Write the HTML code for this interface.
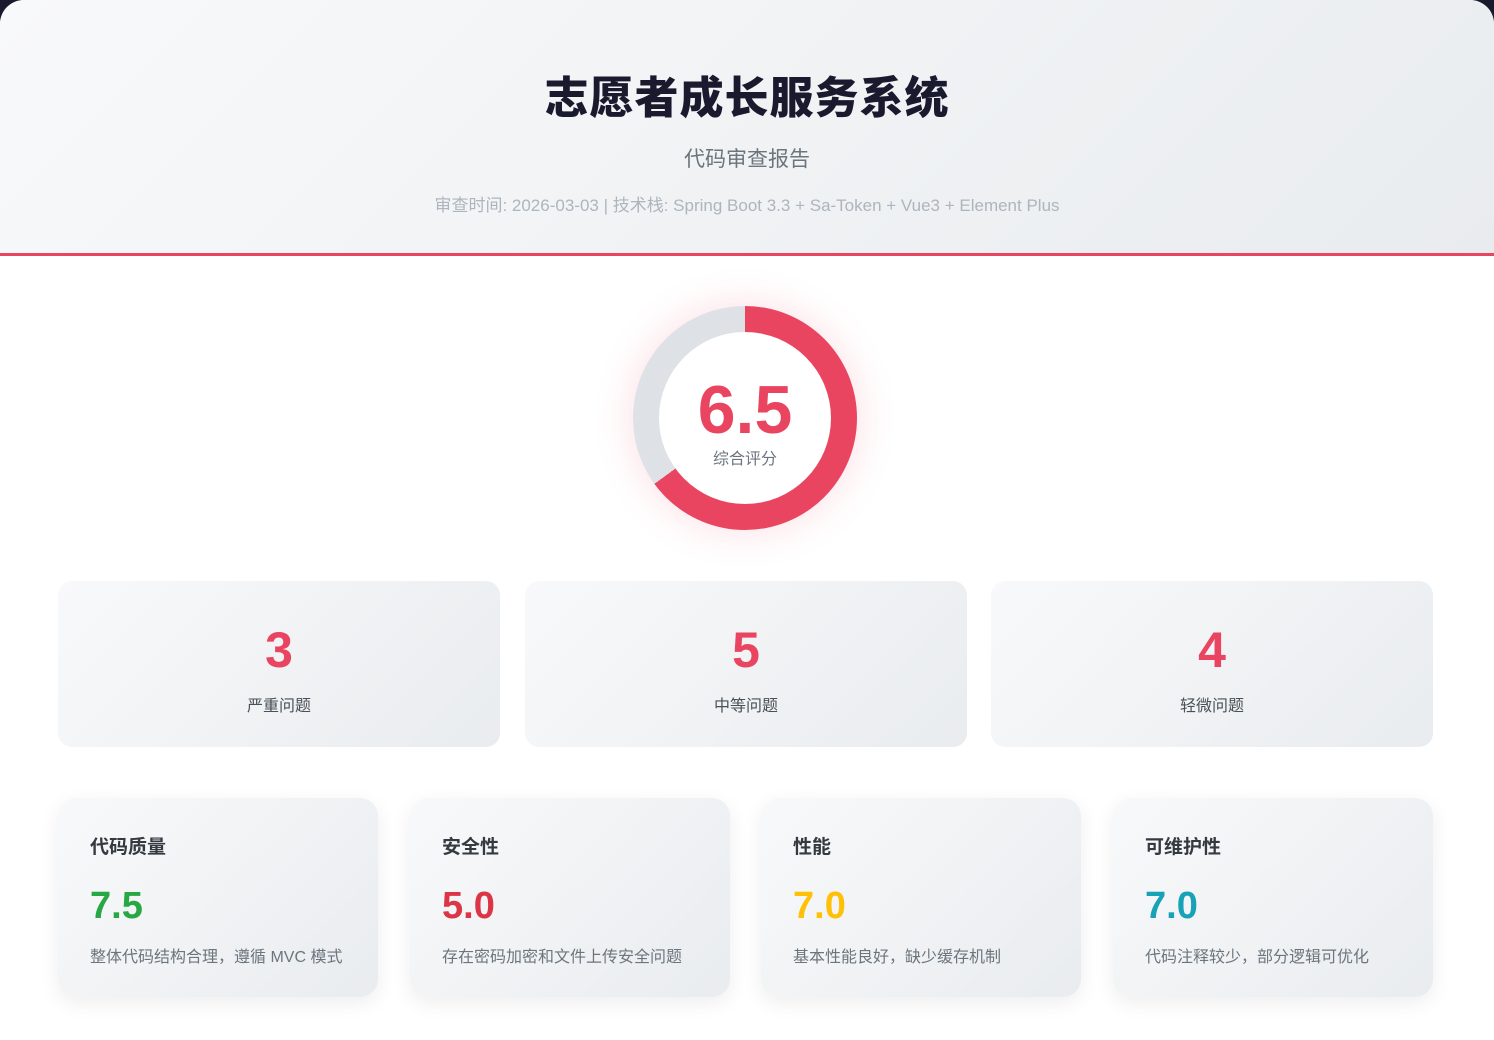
<!DOCTYPE html>
<html><head><meta charset="utf-8"><style>
*{margin:0;padding:0;box-sizing:border-box}
html,body{width:1494px;height:1040px;background:#1a1a2e;overflow:hidden}
body{font-family:"Liberation Sans","Noto Sans CJK SC",sans-serif}
.page{position:absolute;left:0;top:0;width:1494px;height:1040px;background:#fff;border-radius:24px 24px 0 0;overflow:hidden}
.hdr{height:256px;background:linear-gradient(135deg,#f8f9fa,#e9ecef);border-bottom:3px solid #e94560;text-align:center}
h1{position:absolute;top:62px;width:100%;font-size:44px;font-weight:900;color:#1a1a2e;letter-spacing:1px}
.sub{position:absolute;top:143px;width:100%;font-size:21px;color:#6c757d}
.meta{position:absolute;top:191px;width:100%;font-size:17px;color:#adb5bd}
.ring{position:absolute;left:633px;top:306px;width:224px;height:224px;border-radius:50%;box-shadow:0 0 40px rgba(233,69,96,.18);background:conic-gradient(#e94560 0 65%,#dee2e6 65% 100%)}
.ring .in{position:absolute;left:26px;top:26px;width:172px;height:172px;border-radius:50%;background:#fff;text-align:center}
.big{position:absolute;left:0;top:44px;width:100%;font-size:68px;font-weight:900;color:#e94560;line-height:1}
.lab{position:absolute;left:0;top:113px;width:100%;font-size:16px;color:#6c757d}
.ic{position:absolute;top:581px;width:442px;height:166px;border-radius:14px;background:linear-gradient(135deg,#f8f9fa,#e9ecef);text-align:center}
.ic b{display:block;position:absolute;left:0;top:44px;width:100%;font-size:50px;font-weight:900;color:#e94560;line-height:1}
.ic span{display:block;position:absolute;left:0;top:111px;width:100%;font-size:16px;color:#495057}
.sc{position:absolute;top:798px;width:320px;height:199px;border-radius:18px;background:linear-gradient(135deg,#f8f9fa,#e9ecef);box-shadow:0 6px 20px rgba(0,0,0,.07);padding-left:32px}
.sc h3{position:absolute;top:34px;font-size:19px;font-weight:700;color:#343a40}
.sc .v{position:absolute;top:89px;font-size:38px;font-weight:900;line-height:1}
.sc p{position:absolute;top:145px;font-size:16px;color:#6c757d;white-space:nowrap}
</style></head><body><div class="page">
<div class="hdr">
<h1>志愿者成长服务系统</h1>
<div class="sub">代码审查报告</div>
<div class="meta">审查时间: 2026-03-03 | 技术栈: Spring Boot 3.3 + Sa-Token + Vue3 + Element Plus</div>
</div>
<div class="ring"><div class="in"><div class="big">6.5</div><div class="lab">综合评分</div></div></div>
<div class="ic" style="left:58px"><b>3</b><span>严重问题</span></div>
<div class="ic" style="left:525px"><b>5</b><span>中等问题</span></div>
<div class="ic" style="left:991px"><b>4</b><span>轻微问题</span></div>
<div class="sc" style="left:58px"><h3>代码质量</h3><div class="v" style="color:#28a745">7.5</div><p>整体代码结构合理，遵循 MVC 模式</p></div>
<div class="sc" style="left:410px"><h3>安全性</h3><div class="v" style="color:#dc3545">5.0</div><p>存在密码加密和文件上传安全问题</p></div>
<div class="sc" style="left:761px"><h3>性能</h3><div class="v" style="color:#ffc107">7.0</div><p>基本性能良好，缺少缓存机制</p></div>
<div class="sc" style="left:1113px"><h3>可维护性</h3><div class="v" style="color:#17a2b8">7.0</div><p>代码注释较少，部分逻辑可优化</p></div>
</div></body></html>
